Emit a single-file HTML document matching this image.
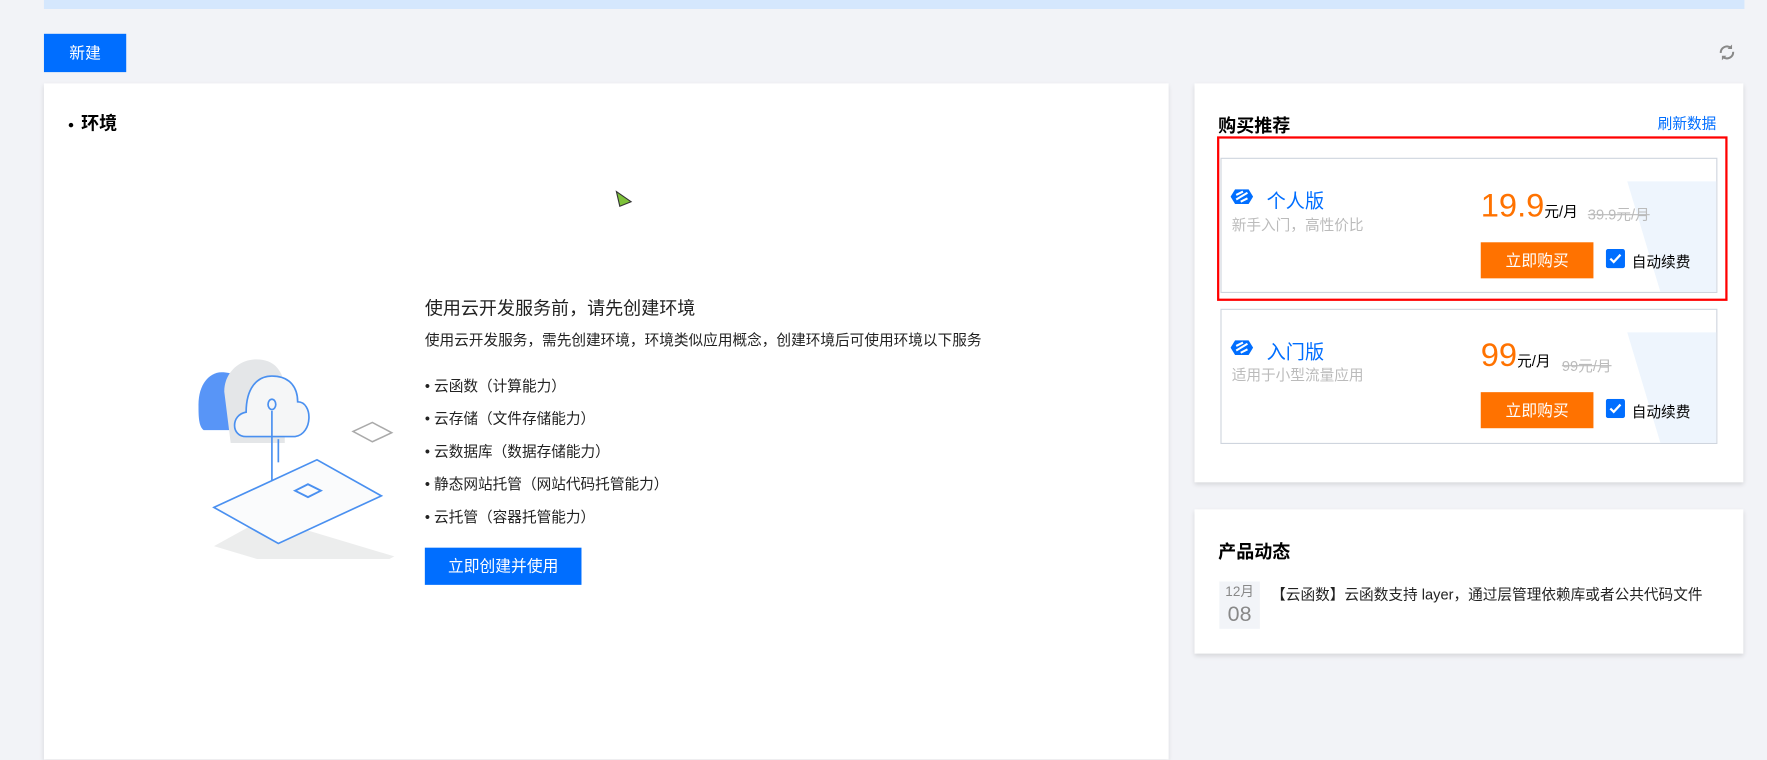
<!DOCTYPE html>
<html><head><meta charset="utf-8"><style>
*{margin:0;padding:0;box-sizing:border-box}
body{width:1767px;height:660px;overflow:hidden;background:#f2f3f7;font-family:"Liberation Sans","Noto Sans CJK SC",sans-serif;color:#000}
#w{position:absolute;left:0;top:0;width:1568px;height:586px;transform:scale(1.1269);transform-origin:0 0}
.a{position:absolute}
.card{position:absolute;background:#fff;box-shadow:0 2px 4px rgba(0,0,0,.12)}
.btn{position:absolute;background:#006eff;color:#fff;font-size:14px;text-align:center}
.ob{position:absolute;background:#ff7200;color:#fff;font-size:14px;text-align:center;width:100px;height:32px;line-height:32px}
.plan{position:absolute;left:1083px;width:441px;border:1px solid #cfd5de;background:#fff;overflow:hidden}
.chk{position:absolute}
</style></head><body><div id="w">
<div class="a" style="left:39px;top:0;width:1509px;height:8px;background:#d5e7fd"></div>
<div class="btn" style="left:39px;top:30px;width:73px;height:34px;line-height:34px">新建</div>
<svg class="a" style="left:1524px;top:38px" width="17" height="17" viewBox="0 0 17 17"><path d="M3 9a5.5 5.5 0 0 1 9-4.5M14 8a5.5 5.5 0 0 1-9 4.5" stroke="#888" stroke-width="1.8" fill="none"/><path d="M13 1.5v4h-4zM4 15.5v-4h4z" fill="#888"/></svg>

<div class="card" style="left:39px;top:74px;width:998px;height:600px">
<div class="a" style="left:22px;top:35px;width:4px;height:4px;border-radius:50%;background:#000"></div>
<div class="a" style="left:33px;top:22px;font-size:16px;font-weight:bold">环境</div>
<svg class="a" style="left:507px;top:95px" width="16" height="20"><path d="M1 1l13 9-10 4z" fill="#7ec23a" stroke="#333" stroke-width="1"/></svg>
<svg class="a" style="left:128px;top:222px" width="200" height="200" viewBox="0 0 175 175">
<path d="M8 55c0-15 8-25 18-25 10 0 15 5 18 10v35H12C8 72 8 64 8 55z" fill="#3b82f6" opacity=".85"/>
<path d="M28 45c0-15 12-25 25-25 15 0 20 10 22 20v45H33z" fill="#e4e6e8"/>
<path d="M45 80c-12 0-12-17 0-19 0-18 8-28 20-28 15 0 20 10 20 20 12 0 12 25-2 27z" fill="#f5f6f7" stroke="#4a90f0" stroke-width="1.3"/>
<line x1="65" y1="60" x2="65" y2="128" stroke="#4a90f0" stroke-width="1.3"/>
<line x1="70" y1="82" x2="70" y2="100" stroke="#4a90f0" stroke-width="1.3"/>
<ellipse cx="65" cy="55" rx="3" ry="4" fill="none" stroke="#4a90f0" stroke-width="1.3"/>
<path d="M20 165l40-22 100 30-40 22z" fill="#eceded"/>
<path d="M20 135l80-37 50 28-80 37z" fill="#fafbfc" stroke="#4a90f0" stroke-width="1.3"/>
<path d="M83 122l10-5 10 5-10 5z" fill="none" stroke="#4a90f0" stroke-width="1.5"/>
<path d="M128 76l15-7 15 8-15 7z" fill="#fff" stroke="#aaa" stroke-width="1.2"/>
</svg>
<div class="a" style="left:338px;top:186px;font-size:16px;color:#222">使用云开发服务前，请先创建环境</div>
<div class="a" style="left:338px;top:217px;font-size:13px;color:#222">使用云开发服务，需先创建环境，环境类似应用概念，创建环境后可使用环境以下服务</div>
<div class="a" style="left:338px;top:254px;font-size:13px;color:#222;line-height:29px">• 云函数（计算能力）<br>• 云存储（文件存储能力）<br>• 云数据库（数据存储能力）<br>• 静态网站托管（网站代码托管能力）<br>• 云托管（容器托管能力）</div>
<div class="btn" style="left:338px;top:412px;width:139px;height:33px;line-height:33px">立即创建并使用</div>
</div>

<div class="card" style="left:1060px;top:74px;width:487px;height:354px"></div>
<div class="a" style="left:1081px;top:98px;font-size:16px;font-weight:bold">购买推荐</div>
<div class="a" style="left:1471px;top:99px;font-size:13px;color:#006eff">刷新数据</div>

<div class="plan" style="top:140px;height:120px">
<svg class="a" style="left:280px;top:0" width="161" height="120"><path d="M80 20h81v100H110z" fill="#eef5fd"/></svg>
</div>
<div class="plan" style="top:274px;height:120px">
<svg class="a" style="left:280px;top:0" width="161" height="120"><path d="M80 20h81v100H110z" fill="#eef5fd"/></svg>
</div>
<div class="a" style="left:1080px;top:121px;width:453px;height:146px;border:2px solid #f00"></div>

<svg class="a" style="left:1092px;top:167px" width="20" height="15" viewBox="0 0 20 15"><path d="M4 1h12l4 6.5-4 6.5H4L0 7.5z" fill="#006eff"/><path d="M5 10l10-6M5 6l6-3M9 12l6-3" stroke="#fff" stroke-width="1.8"/></svg>
<div class="a" style="left:1124px;top:164px;font-size:17px;color:#006eff">个人版</div>
<div class="a" style="left:1093px;top:189px;font-size:13px;color:#bbb">新手入门，高性价比</div>
<div class="a" style="left:1314px;top:167px;font-size:29px;color:#ff7200">19.9<span style="font-size:13px;color:#000">元/月</span></div>
<div class="a" style="left:1409px;top:180px;font-size:13px;color:#bbb;text-decoration:line-through">39.9元/月</div>
<div class="ob" style="left:1314px;top:215px">立即购买</div>
<svg class="chk" style="left:1425px;top:221px" width="17" height="17"><rect width="17" height="17" rx="2" fill="#006eff"/><path d="M4 8.5l3 3 6-6.5" stroke="#fff" stroke-width="2" fill="none"/></svg>
<div class="a" style="left:1448px;top:222px;font-size:13px">自动续费</div>

<svg class="a" style="left:1092px;top:301px" width="20" height="15" viewBox="0 0 20 15"><path d="M4 1h12l4 6.5-4 6.5H4L0 7.5z" fill="#006eff"/><path d="M5 10l10-6M5 6l6-3M9 12l6-3" stroke="#fff" stroke-width="1.8"/></svg>
<div class="a" style="left:1124px;top:298px;font-size:17px;color:#006eff">入门版</div>
<div class="a" style="left:1093px;top:322px;font-size:13px;color:#bbb">适用于小型流量应用</div>
<div class="a" style="left:1314px;top:300px;font-size:29px;color:#ff7200">99<span style="font-size:13px;color:#000">元/月</span></div>
<div class="a" style="left:1386px;top:314px;font-size:13px;color:#bbb;text-decoration:line-through">99元/月</div>
<div class="ob" style="left:1314px;top:348px">立即购买</div>
<svg class="chk" style="left:1425px;top:354px" width="17" height="17"><rect width="17" height="17" rx="2" fill="#006eff"/><path d="M4 8.5l3 3 6-6.5" stroke="#fff" stroke-width="2" fill="none"/></svg>
<div class="a" style="left:1448px;top:355px;font-size:13px">自动续费</div>

<div class="card" style="left:1060px;top:452px;width:487px;height:128px"></div>
<div class="a" style="left:1081px;top:476px;font-size:16px;font-weight:bold">产品动态</div>
<div class="a" style="left:1082px;top:516px;width:36px;height:42px;background:#f2f4f8;text-align:center;color:#888;font-size:12px;line-height:18px">12月<br><span style="font-size:19px;line-height:24px">08</span></div>
<div class="a" style="left:1128px;top:517px;font-size:13px;color:#222">【云函数】云函数支持 layer，通过层管理依赖库或者公共代码文件</div>
</div></body></html>
